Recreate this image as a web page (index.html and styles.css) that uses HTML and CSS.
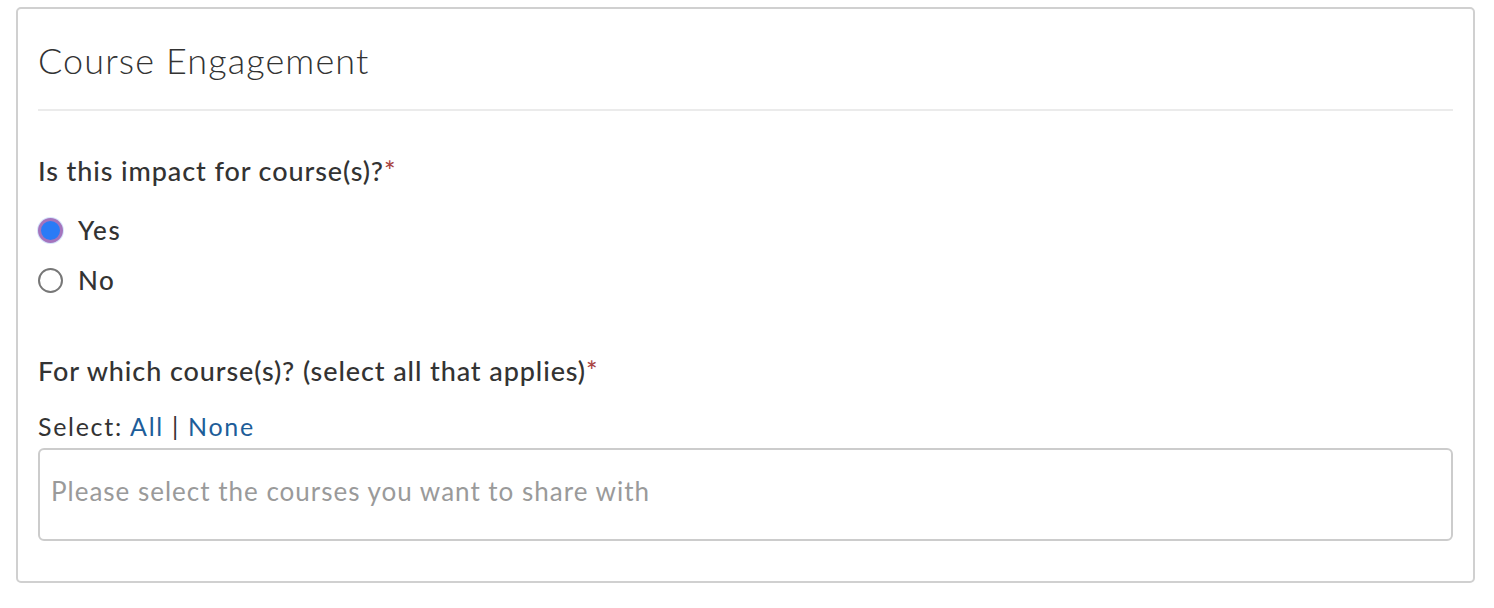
FILE: index.html
```html
<!DOCTYPE html>
<html lang="en">
<head>
  <meta charset="UTF-8">
  <meta name="viewport" content="width=device-width, initial-scale=1.0">
  <title>Course Engagement</title>
  <link rel="stylesheet" href="styles.css">
</head>
<body>
  <div class="panel">
    <h2 class="panel-title">Course Engagement</h2>

    <div class="field">
      <p class="field-label">Is this impact for course(s)?<span class="required">*</span></p>
      <label class="radio-row">
        <input type="radio" name="impact" checked>
        <span>Yes</span>
      </label>
      <label class="radio-row">
        <input type="radio" name="impact">
        <span>No</span>
      </label>
    </div>

    <div class="field courses">
      <p class="field-label">For which course(s)? (select all that applies)<span class="required">*</span></p>
      <p class="select-links">Select: <a href="#">All</a> | <a href="#">None</a></p>
      <div class="course-input">Please select the courses you want to share with</div>
    </div>
  </div>
</body>
</html>
```

FILE: styles.css
```css
body {
  margin: 0;
  padding: 7px 19px 0 16px;
  font-family: Lato, "Noto Sans", sans-serif;
  color: #333;
  background: #fff;
}
.panel {
  border: 2px solid #d0d0d0;
  border-radius: 5px;
  padding: 0 20px 40px 20px;
}
.panel-title {
  font-size: 36px;
  font-weight: 300;
  letter-spacing: 1.1px;
  line-height: 44px;
  margin: 0;
  padding: 29px 0 27px;
  border-bottom: 2px solid #ebebeb;
}
.field {
  margin-top: 44px;
}
.courses {
  margin-top: 50px;
}
.field-label {
  font-size: 27px;
  font-weight: 500;
  letter-spacing: 0.9px;
  line-height: 32px;
  margin: 0 0 18px;
}
.courses .field-label {
  margin-bottom: 24px;
}
.required {
  color: #a94442;
}
.radio-row {
  display: flex;
  align-items: center;
  gap: 15px;
  font-size: 26px;
  font-weight: 500;
  letter-spacing: 1.6px;
  height: 50px;
}
.radio-row input {
  appearance: none;
  box-sizing: border-box;
  width: 25px;
  height: 25px;
  margin: 0;
  border: 2px solid #777;
  border-radius: 50%;
  background: #fff;
}
.radio-row input:checked {
  border: 3px solid #a474bd;
  background: #2a7bf6;
  box-shadow: 0 0 0 1px #d6e4fb;
}
.select-links {
  font-size: 25px;
  letter-spacing: 1.7px;
  line-height: 30px;
  margin: 0 0 7px;
}
.select-links a {
  color: #1d5d99;
  text-decoration: none;
}
.course-input {
  box-sizing: border-box;
  height: 93px;
  border: 2px solid #ccc;
  border-radius: 6px;
  padding: 26px 11px 0;
  font-size: 26px;
  letter-spacing: 1px;
  line-height: 30px;
  color: #9a9a9a;
}
```
